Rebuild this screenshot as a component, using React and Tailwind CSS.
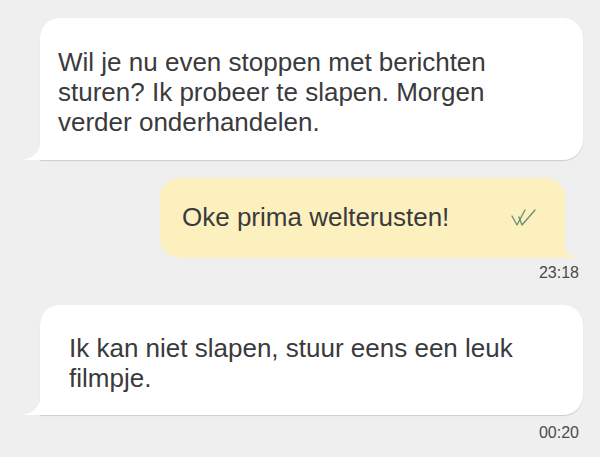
export default function App() {
  return (
    <div className="w-[600px] h-[457px] overflow-hidden bg-[#efefef] [font-family:'Liberation_Sans',Arial,sans-serif] text-[#3a3a3c]">
      <div className="flex flex-col pt-[18px]">
        {/* incoming */}
        <div className="relative ml-[40px] w-[543px] bg-white rounded-[20px] rounded-bl-none shadow-[0_1px_1px_rgba(0,0,0,0.15)] pl-[18px] pt-[29px] pb-[23px]">
          <p className="text-[26px] leading-[30px] w-[455px]">
            Wil je nu even stoppen met berichten sturen? Ik probeer te slapen. Morgen verder onderhandelen.
          </p>
          <svg className="absolute -left-[17px] bottom-0" width="18" height="20" viewBox="0 0 18 20">
            <path d="M18 0 C18 10 11 18 0 20 L18 20 Z" fill="#fff" />
          </svg>
        </div>

        {/* outgoing */}
        <div className="relative mt-[18px] ml-[160px] w-[405px] bg-[#fdf0bf] rounded-[20px] rounded-br-none pl-[22px] pr-[28px] pt-[24px] pb-[26px] flex items-center justify-between">
          <p className="text-[26px] leading-[30px]">Oke prima welterusten!</p>
          <svg width="26" height="20" viewBox="0 0 26 20" fill="none" stroke="#6f9078" strokeWidth="1.4" strokeLinecap="round" strokeLinejoin="round">
            <path d="M1 9 L6 18 L14 3" />
            <path d="M8 10 L11 18 L24 3" />
          </svg>
          <svg className="absolute -right-[12px] bottom-0" width="13" height="16" viewBox="0 0 13 16">
            <path d="M0 0 C0 8 5 14 13 16 L0 16 Z" fill="#fdf0bf" />
          </svg>
        </div>
        <div className="self-end mr-[21px] mt-[5px] text-[16px] leading-[20px] text-[#4a4a4a]">23:18</div>

        {/* incoming */}
        <div className="relative mt-[22px] ml-[40px] w-[543px] bg-white rounded-[20px] rounded-bl-none shadow-[0_1px_1px_rgba(0,0,0,0.15)] pl-[29px] pt-[28px] pb-[22px]">
          <p className="text-[26px] leading-[30px] w-[470px]">
            Ik kan niet slapen, stuur eens een leuk filmpje.
          </p>
          <svg className="absolute -left-[17px] bottom-0" width="18" height="20" viewBox="0 0 18 20">
            <path d="M18 0 C18 10 11 18 0 20 L18 20 Z" fill="#fff" />
          </svg>
        </div>
        <div className="self-end mr-[21px] mt-[8px] text-[16px] leading-[20px] text-[#4a4a4a]">00:20</div>
      </div>
    </div>
  )
}
